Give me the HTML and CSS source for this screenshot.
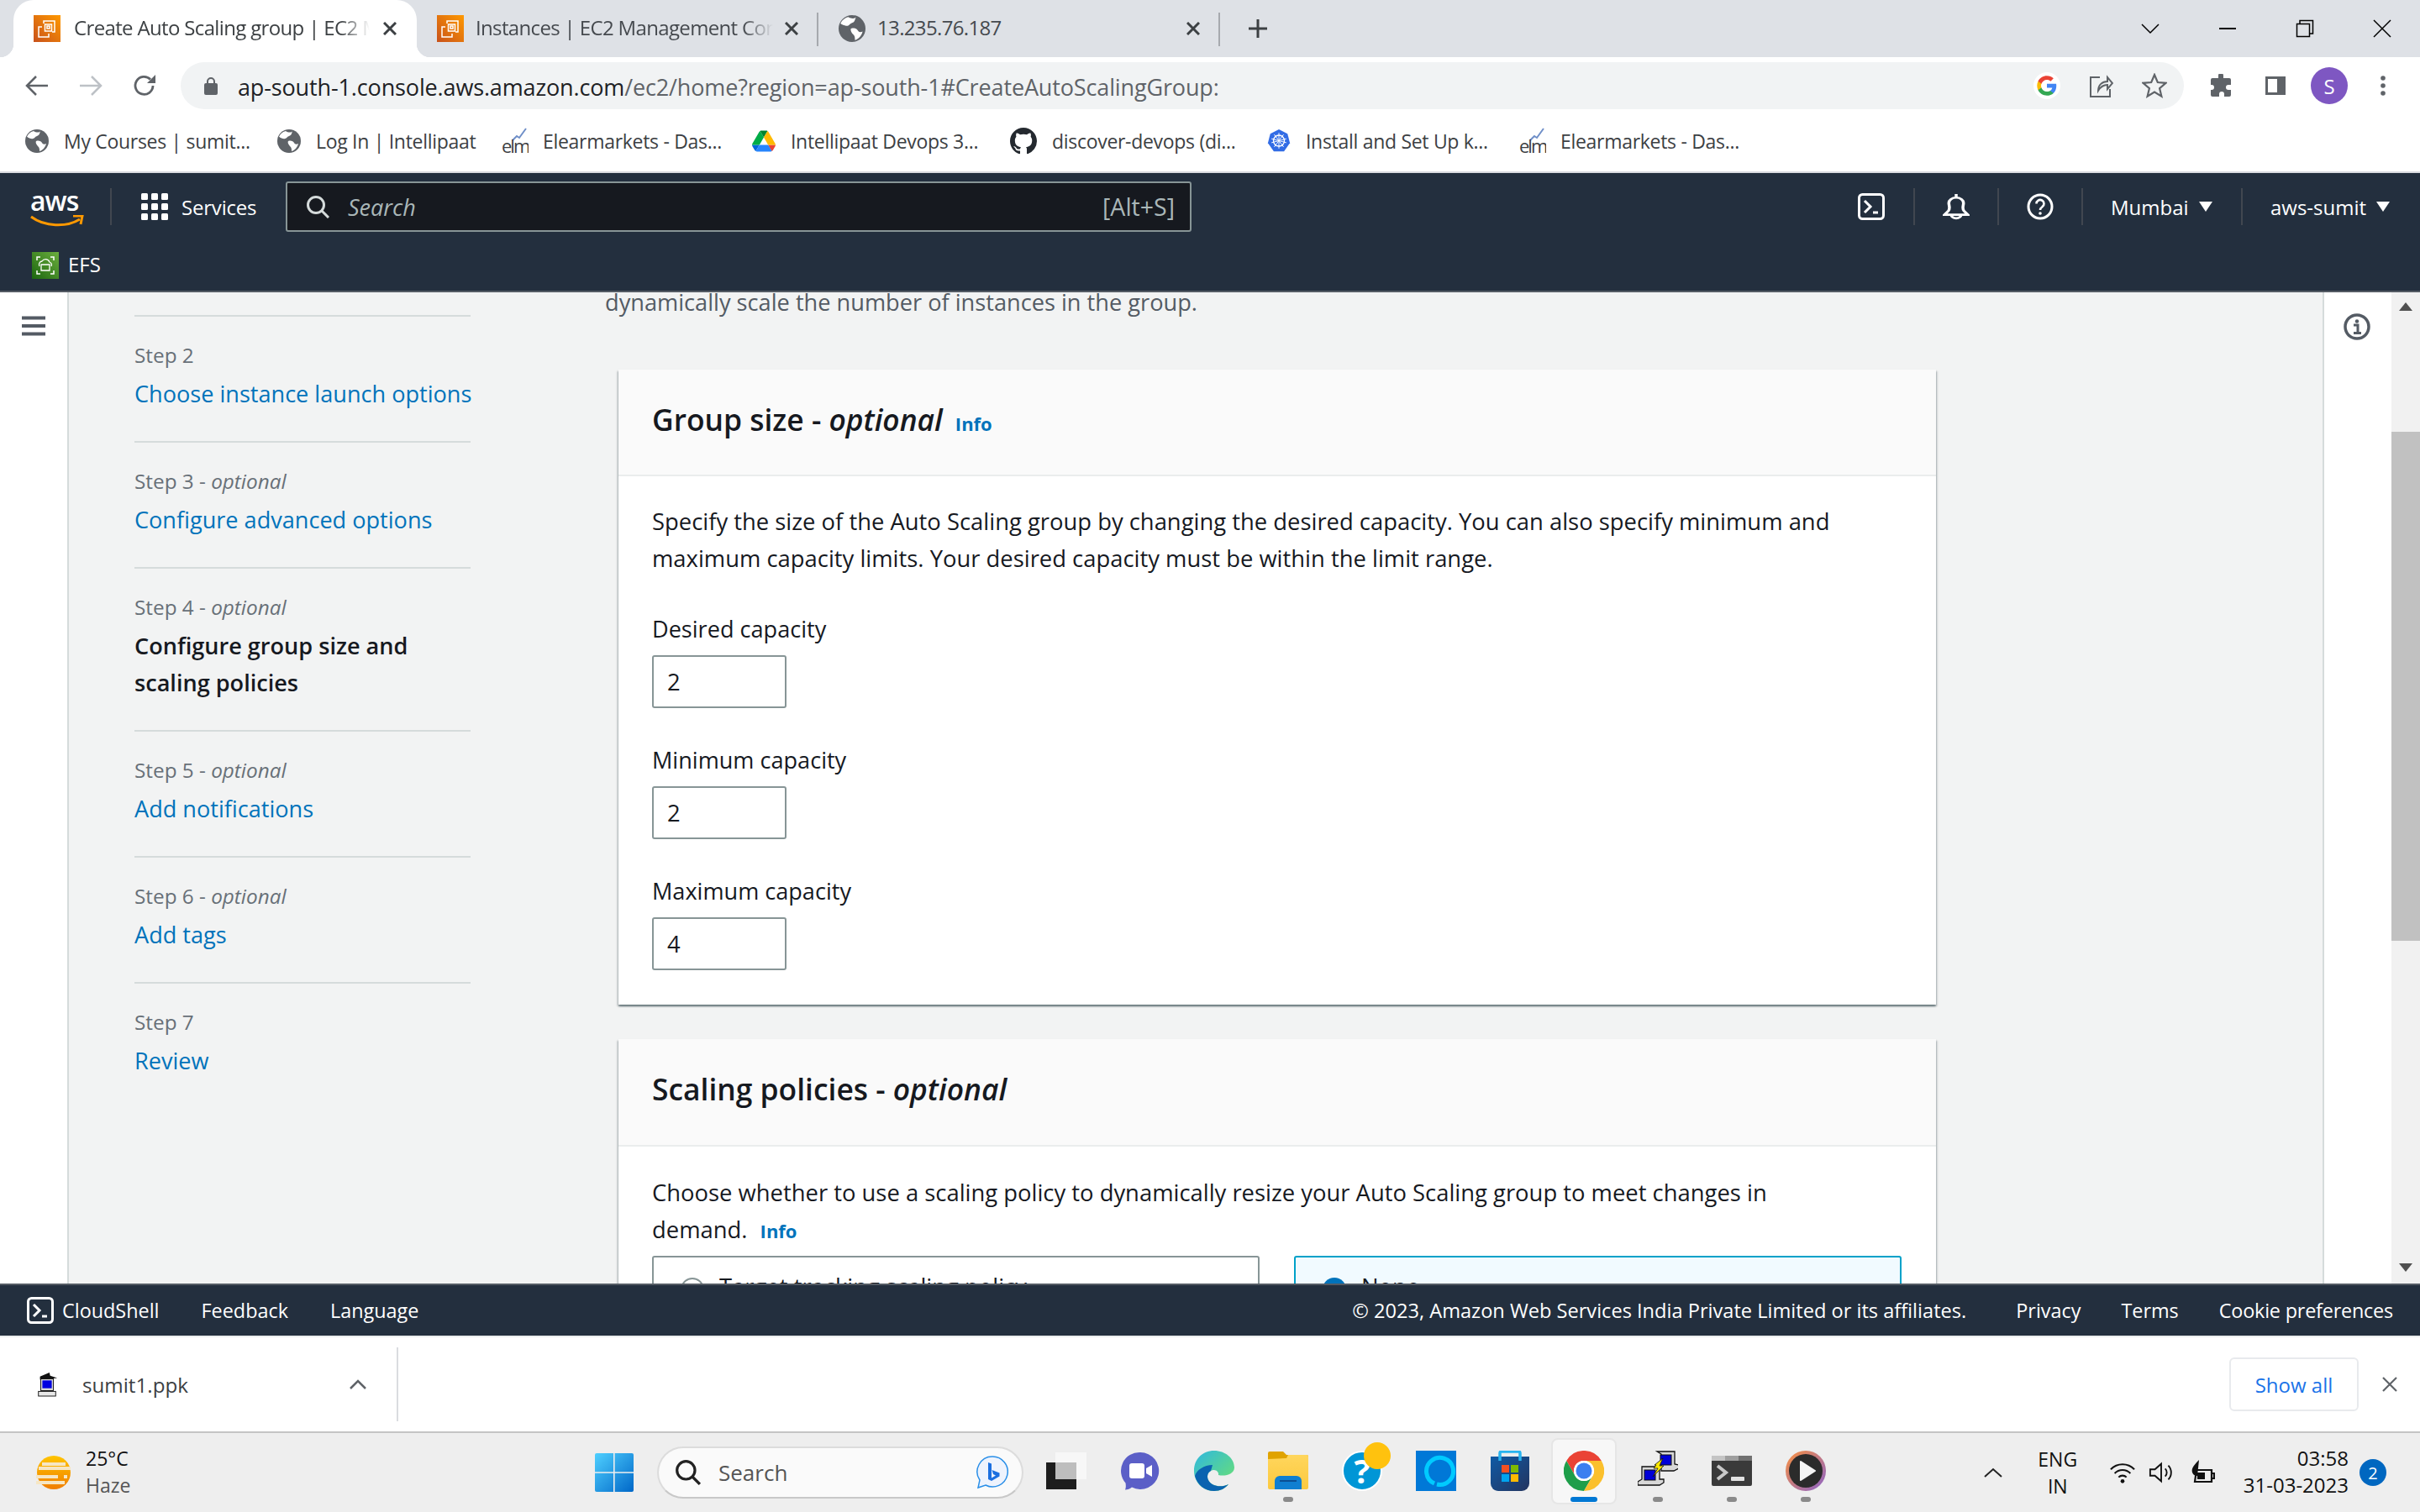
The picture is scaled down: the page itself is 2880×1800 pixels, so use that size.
FILE: index.html
```html
<!DOCTYPE html>
<html lang="en">
<head>
    <meta charset="UTF-8">
    <title>Create Auto Scaling group | EC2 Management Console</title>
    <link rel="stylesheet" href="styles.css">
</head>
<body>
    <svg class="sprite" xmlns="http://www.w3.org/2000/svg">
        <defs>
            <linearGradient id="ec2Grad" x1="0" y1="1" x2="1" y2="0"><stop offset="0" stop-color="#c8511b"/><stop offset="1" stop-color="#ff9900"/></linearGradient>
            <linearGradient id="efsGrad" x1="0" y1="1" x2="1" y2="0"><stop offset="0" stop-color="#1b660f"/><stop offset="1" stop-color="#6cae3e"/></linearGradient>
            <linearGradient id="winGrad" x1="0" y1="0" x2="1" y2="1"><stop offset="0" stop-color="#4fd0ff"/><stop offset="1" stop-color="#0067c8"/></linearGradient>
            <linearGradient id="edgeGrad" x1="0" y1="0" x2="1" y2="1"><stop offset="0" stop-color="#2fb8e0"/><stop offset="1" stop-color="#6fe36a"/></linearGradient>
            <linearGradient id="folderGrad" x1="0" y1="0" x2="0" y2="1"><stop offset="0" stop-color="#ffd65c"/><stop offset="1" stop-color="#fcc93f"/></linearGradient>
            <linearGradient id="playGrad" x1="0" y1="0" x2="1" y2="1"><stop offset="0" stop-color="#f9903e"/><stop offset="1" stop-color="#8b62c9"/></linearGradient>
            <linearGradient id="sunGrad" x1="0" y1="0" x2="0" y2="1"><stop offset="0" stop-color="#ffc400"/><stop offset="1" stop-color="#f07d00"/></linearGradient>
            <linearGradient id="storeGrad" x1="0" y1="0" x2="1" y2="1"><stop offset="0" stop-color="#0f5aa5"/><stop offset="1" stop-color="#23345f"/></linearGradient>
        </defs>
        <symbol id="ec2" viewBox="0 0 32 32">
            <rect width="32" height="32" fill="url(#ec2Grad)"/>
            <path d="M12 10V7h13v13h-3M16 13h3v3h-3zM13.500 11h8v8h-8zM10 14H6v12h12v-4" fill="none" stroke="#fff" stroke-width="1.500"/>
        </symbol>
        <symbol id="globe" viewBox="0 0 28 28">
            <circle cx="14" cy="14" r="14" fill="#5f6368"/>
            <path d="M10 2c3 2 7 2 8 0-1 3-1 5-4 6s-3 4-7 3-4-2-5-2c1-3 4-6 8-7zM13 14c3-1 6 0 7 2s3 2 5 1c-1 4-4 8-8 9 0-3 0-4-2-6s-3-5-2-6z" fill="#fff"/>
        </symbol>
        <symbol id="elm" viewBox="0 0 32 32">
            <path d="M13 15l5-5 3 2 8-11" fill="none" stroke="#6f8fc8" stroke-width="2"/>
            <text x="0" y="30" class="elm-text">elm</text>
        </symbol>
        <symbol id="drive" viewBox="0 0 87.300 78">
            <path d="m6.600 66.850 3.850 6.650c.8 1.400 1.950 2.500 3.300 3.300l13.750-23.800h-27.500c0 1.550.4 3.100 1.200 4.500z" fill="#0066da"/>
            <path d="m43.650 25-13.750-23.800c-1.350.8-2.500 1.900-3.300 3.300l-25.400 44a9.060 9.060 0 0 0 -1.200 4.500h27.500z" fill="#00ac47"/>
            <path d="m73.550 76.800c1.350-.8 2.500-1.900 3.300-3.300l1.600-2.750 7.650-13.250c.8-1.400 1.200-2.950 1.200-4.500h-27.502l5.852 11.500z" fill="#ea4335"/>
            <path d="m43.650 25 13.750-23.800c-1.350-.8-2.900-1.200-4.500-1.200h-18.500c-1.600 0-3.150.45-4.500 1.200z" fill="#00832d"/>
            <path d="m59.800 53h-32.300l-13.750 23.800c1.350.8 2.900 1.200 4.500 1.200h50.800c1.600 0 3.150-.45 4.500-1.200z" fill="#2684fc"/>
            <path d="m73.400 26.500-12.700-22c-.8-1.400-1.950-2.500-3.300-3.300l-13.750 23.800 16.150 28h27.450c0-1.550-.4-3.100-1.200-4.500z" fill="#ffba00"/>
        </symbol>
        <symbol id="github" viewBox="0 0 16 16">
            <path d="M8 0C3.580 0 0 3.580 0 8c0 3.540 2.290 6.530 5.470 7.590.4.07.55-.17.55-.38 0-.19-.01-.82-.01-1.490-2.010.37-2.530-.49-2.690-.94-.09-.23-.48-.94-.82-1.130-.28-.15-.68-.52-.01-.53.63-.01 1.080.58 1.230.82.72 1.210 1.870.87 2.330.66.07-.52.28-.87.51-1.070-1.780-.2-3.640-.89-3.640-3.950 0-.87.31-1.590.82-2.150-.08-.2-.36-1.020.08-2.120 0 0 .67-.21 2.200.82.64-.18 1.320-.27 2-.27.68 0 1.360.09 2 .27 1.530-1.040 2.200-.82 2.200-.82.44 1.100.16 1.920.08 2.120.51.56.82 1.270.82 2.150 0 3.070-1.870 3.750-3.650 3.950.29.25.54.73.54 1.480 0 1.070-.01 1.930-.01 2.200 0 .21.15.46.55.38A8.013 8.013 0 0016 8c0-4.420-3.580-8-8-8z" fill="#24292f"/>
        </symbol>
        <symbol id="k8s" viewBox="0 0 30 30">
            <path d="M15 0l11 5.500 3 12-7.500 10.500h-13L1 17.500l3-12z" fill="#326ce5"/>
            <circle cx="15" cy="14.500" r="7" fill="none" stroke="#fff" stroke-width="1.500"/>
            <path d="M15 4.500v20M5.500 12l19 5M24.500 12l-19 5M9 6.500l12 16M21 6.500l-12 16" stroke="#fff" stroke-width="1"/>
        </symbol>
        <symbol id="shell" viewBox="0 0 32 32">
            <rect x="1.500" y="1.500" width="29" height="29" rx="4" fill="none" stroke="#fff" stroke-width="3"/>
            <path d="M8 9l7 7-7 7" fill="none" stroke="#fff" stroke-width="3"/>
            <path d="M18 23h6" stroke="#fff" stroke-width="3"/>
        </symbol>
        <symbol id="caret" viewBox="0 0 16 12"><path d="M0 0h16L8 12z" fill="#fff"/></symbol>
    </svg>

    <div class="tabstrip">
        <div class="tab tab-active">
            <svg class="fav"><use href="#ec2"/></svg>
            <span class="tab-title">Create Auto Scaling group | EC2 M</span>
            <svg class="tab-close" viewBox="0 0 16 16"><path d="M1 1l14 14M15 1L1 15" stroke="#3c4043" stroke-width="3"/></svg>
        </div>
        <div class="tab tab-sep">
            <svg class="fav"><use href="#ec2"/></svg>
            <span class="tab-title">Instances | EC2 Management Con</span>
            <svg class="tab-close" viewBox="0 0 16 16"><path d="M1 1l14 14M15 1L1 15" stroke="#3c4043" stroke-width="3"/></svg>
        </div>
        <div class="tab tab-sep">
            <svg class="fav"><use href="#globe"/></svg>
            <span class="tab-title tab-title-full">13.235.76.187</span>
            <svg class="tab-close" viewBox="0 0 16 16"><path d="M1 1l14 14M15 1L1 15" stroke="#3c4043" stroke-width="3"/></svg>
        </div>
        <svg class="newtab" viewBox="0 0 24 24"><path d="M12 1v22M1 12h22" stroke="#3c4043" stroke-width="3"/></svg>
        <div class="winctl">
            <svg viewBox="0 0 22 12"><path d="M1 1l10 10L21 1" fill="none" stroke="#000" stroke-width="1.500"/></svg>
            <svg viewBox="0 0 22 12"><path d="M1 6h20" stroke="#000" stroke-width="2"/></svg>
            <svg viewBox="0 0 22 22"><path d="M1.500 5.500h15v15h-15zM5 5V1.500h15.500V17H17" fill="none" stroke="#000" stroke-width="1.500"/></svg>
            <svg viewBox="0 0 22 22"><path d="M1 1l20 20M21 1L1 21" stroke="#000" stroke-width="1.500"/></svg>
        </div>
    </div>

    <div class="toolbar">
        <svg class="tool" viewBox="0 0 28 26"><path d="M27 13H3M13 2L2 13l11 11" fill="none" stroke="#5f6368" stroke-width="2.500"/></svg>
        <svg class="tool tool-off" viewBox="0 0 28 26"><path d="M1 13h24M15 2l11 11-11 11" fill="none" stroke="#bdc1c6" stroke-width="2.500"/></svg>
        <svg class="tool" viewBox="0 0 28 28"><path d="M24 14a10.500 10.500 0 1 1-3-7.500" fill="none" stroke="#5f6368" stroke-width="2.800"/><path d="M27 1v10H17z" fill="#5f6368"/></svg>
        <div class="omnibox">
            <svg class="lock" viewBox="0 0 16 22"><path d="M4 9V6a4 4 0 0 1 8 0v3" fill="none" stroke="#5f6368" stroke-width="2"/><rect y="8" width="16" height="14" rx="2" fill="#5f6368"/></svg>
            <span class="url">ap-south-1.console.aws.amazon.com<span class="url-dim">/ec2/home?region=ap-south-1#CreateAutoScalingGroup:</span></span>
            <svg class="g-logo" viewBox="0 0 24 24">
                <circle cx="12" cy="12" r="12" fill="#fff"/>
                <g transform="translate(2.400 2.400) scale(.8)">
                    <path d="M22.560 12.250c0-.78-.07-1.530-.2-2.250H12v4.260h5.920c-.26 1.370-1.040 2.530-2.210 3.310v2.770h3.570c2.080-1.920 3.280-4.740 3.280-8.090z" fill="#4285F4"/>
                    <path d="M12 23c2.970 0 5.460-.98 7.280-2.660l-3.570-2.770c-.98.66-2.230 1.060-3.710 1.060-2.860 0-5.290-1.930-6.160-4.530H2.180v2.840C3.990 20.530 7.700 23 12 23z" fill="#34A853"/>
                    <path d="M5.840 14.090c-.22-.66-.35-1.360-.35-2.090s.13-1.430.35-2.090V7.070H2.180C1.430 8.550 1 10.220 1 12s.43 3.450 1.180 4.930l2.850-2.220.81-.62z" fill="#FBBC05"/>
                    <path d="M12 5.380c1.620 0 3.060.56 4.210 1.640l3.150-3.150C17.450 2.090 14.970 1 12 1 7.700 1 3.990 3.470 2.180 7.070l3.660 2.840c.87-2.600 3.300-4.530 6.160-4.530z" fill="#EA4335"/>
                </g>
            </svg>
            <svg class="omni-icon" viewBox="0 0 30 30"><path d="M14 5H3v23h23v-9M12 21c0-7 5-11 11-11V5l6 7-6 7v-5c-5 0-8 2-11 7z" fill="none" stroke="#5f6368" stroke-width="2"/></svg>
            <svg class="omni-icon" viewBox="0 0 30 30"><path d="M15 2l3.800 9 9.700.8-7.400 6.400 2.300 9.500-8.400-5.100-8.400 5.100 2.300-9.500-7.400-6.400 9.700-.8z" fill="none" stroke="#5f6368" stroke-width="2.200"/></svg>
        </div>
        <svg class="tool-r" viewBox="0 0 28 28"><path d="M11 2a3 3 0 0 1 6 0v3h7a2 2 0 0 1 2 2v6h-3a3 3 0 0 0 0 6h3v6a2 2 0 0 1-2 2h-6v-3a3 3 0 0 0-6 0v3H4a2 2 0 0 1-2-2v-6h1a3 3 0 0 0 0-6H2V7a2 2 0 0 1 2-2h7z" fill="#5f6368"/></svg>
        <svg class="tool-r" viewBox="0 0 28 28"><rect x="2" y="3" width="24" height="22" fill="#5f6368"/><rect x="5" y="6" width="11" height="16" fill="#fff"/></svg>
        <div class="avatar">S</div>
        <svg class="tool-r" viewBox="0 0 28 28"><circle cx="14" cy="5" r="2.800" fill="#5f6368"/><circle cx="14" cy="14" r="2.800" fill="#5f6368"/><circle cx="14" cy="23" r="2.800" fill="#5f6368"/></svg>
    </div>

    <div class="bookmarks">
        <div class="bm"><svg class="bm-icon"><use href="#globe"/></svg><span>My Courses | sumit...</span></div>
        <div class="bm"><svg class="bm-icon"><use href="#globe"/></svg><span>Log In | Intellipaat</span></div>
        <div class="bm"><svg class="bm-icon bm-elm"><use href="#elm"/></svg><span>Elearmarkets - Das...</span></div>
        <div class="bm"><svg class="bm-icon"><use href="#drive"/></svg><span>Intellipaat Devops 3...</span></div>
        <div class="bm"><svg class="bm-icon bm-gh"><use href="#github"/></svg><span>discover-devops (di...</span></div>
        <div class="bm"><svg class="bm-icon"><use href="#k8s"/></svg><span>Install and Set Up k...</span></div>
        <div class="bm"><svg class="bm-icon bm-elm"><use href="#elm"/></svg><span>Elearmarkets - Das...</span></div>
    </div>

    <header class="awsnav">
        <div class="navrow">
            <div class="logo">
                <span class="logo-text">aws</span>
                <svg class="logo-smile" viewBox="0 0 64 14"><path d="M1 2c16 12 42 13 58 3" fill="none" stroke="#ff9900" stroke-width="3"/><path d="M51 1l11 0-2 10" fill="none" stroke="#ff9900" stroke-width="3"/></svg>
            </div>
            <div class="services">
                <svg class="grid-icon" viewBox="0 0 32 32">
                    <rect width="8" height="8" rx="1.500"/><rect x="12" width="8" height="8" rx="1.500"/><rect x="24" width="8" height="8" rx="1.500"/>
                    <rect y="12" width="8" height="8" rx="1.500"/><rect x="12" y="12" width="8" height="8" rx="1.500"/><rect x="24" y="12" width="8" height="8" rx="1.500"/>
                    <rect y="24" width="8" height="8" rx="1.500"/><rect x="12" y="24" width="8" height="8" rx="1.500"/><rect x="24" y="24" width="8" height="8" rx="1.500"/>
                </svg>
                <span>Services</span>
            </div>
            <div class="navsearch">
                <svg class="navsearch-icon" viewBox="0 0 28 28"><circle cx="12" cy="12" r="9.500" fill="none" stroke="#d5dbdb" stroke-width="3"/><path d="M19 19l8 8" stroke="#d5dbdb" stroke-width="3"/></svg>
                <span class="navsearch-text">Search</span>
                <span class="navsearch-key">[Alt+S]</span>
            </div>
            <div class="navright">
                <div class="navicon"><svg class="navicon-svg"><use href="#shell"/></svg></div>
                <div class="navicon navsep">
                    <svg class="navicon-svg" viewBox="5 0 22 30" preserveAspectRatio="none"><path d="M16 1v3M9.500 20c2-3 .5-6 .5-9a6 6 0 0 1 12 0c0 3-1.500 6 .5 9l3 4H6.500zM12 24a4 4 0 0 0 8 0" fill="none" stroke="#fff" stroke-width="2.400"/></svg>
                </div>
                <div class="navicon navsep">
                    <svg class="navicon-svg" viewBox="0 0 32 32"><circle cx="16" cy="16" r="14" fill="none" stroke="#fff" stroke-width="3"/><path d="M11.500 12.500a4.500 4.500 0 1 1 7 3.700c-1.700 1.200-2.500 2-2.500 3.800" fill="none" stroke="#fff" stroke-width="2.600"/><circle cx="16" cy="24" r="1.800" fill="#fff"/></svg>
                </div>
                <div class="navmenu navsep navmenu-region"><span>Mumbai</span><svg class="caret"><use href="#caret"/></svg></div>
                <div class="navmenu navsep"><span>aws-sumit</span><svg class="caret"><use href="#caret"/></svg></div>
            </div>
        </div>
        <div class="navrow2">
            <svg class="efs-icon" viewBox="0 0 32 32">
                <rect width="32" height="32" fill="url(#efsGrad)"/>
                <path d="M6 10V6h4M22 6h4v4M26 22v4h-4M10 26H6v-4" fill="none" stroke="#fff" stroke-width="1.500"/>
                <path d="M9 17a4 4 0 0 1 3-6 5 5 0 0 1 9 1 3.500 3.500 0 0 1 2 5" fill="none" stroke="#fff" stroke-width="1.300"/>
                <path d="M11 15h10v7H11z" fill="none" stroke="#fff" stroke-width="1.300"/>
            </svg>
            <span>EFS</span>
        </div>
    </header>

    <div class="console">
        <div class="rail">
            <svg class="hamburger" viewBox="0 0 28 24"><path d="M0 2.500h28M0 12h28M0 21.500h28" stroke="#545b64" stroke-width="4"/></svg>
        </div>
        <div class="workspace">
            <nav class="steps">
                <div class="step">
                    <div class="step-label">Step 2</div>
                    <div class="step-link">Choose instance launch options</div>
                </div>
                <div class="step">
                    <div class="step-label">Step 3 - <i>optional</i></div>
                    <div class="step-link">Configure advanced options</div>
                </div>
                <div class="step">
                    <div class="step-label">Step 4 - <i>optional</i></div>
                    <div class="step-current">Configure group size and<br>scaling policies</div>
                </div>
                <div class="step">
                    <div class="step-label">Step 5 - <i>optional</i></div>
                    <div class="step-link">Add notifications</div>
                </div>
                <div class="step">
                    <div class="step-label">Step 6 - <i>optional</i></div>
                    <div class="step-link">Add tags</div>
                </div>
                <div class="step">
                    <div class="step-label">Step 7</div>
                    <div class="step-link">Review</div>
                </div>
            </nav>
            <main class="formcol">
                <p class="intro">dynamically scale the number of instances in the group.</p>

                <section class="card">
                    <div class="card-head">
                        <h2>Group size - <i>optional</i></h2>
                        <span class="info">Info</span>
                    </div>
                    <div class="card-body">
                        <p>Specify the size of the Auto Scaling group by changing the desired capacity. You can also specify minimum and<br>maximum capacity limits. Your desired capacity must be within the limit range.</p>
                        <div class="field">
                            <label>Desired capacity</label>
                            <div class="numinput">2</div>
                        </div>
                        <div class="field">
                            <label>Minimum capacity</label>
                            <div class="numinput">2</div>
                        </div>
                        <div class="field">
                            <label>Maximum capacity</label>
                            <div class="numinput">4</div>
                        </div>
                    </div>
                </section>

                <section class="card card-second">
                    <div class="card-head">
                        <h2>Scaling policies - <i>optional</i></h2>
                    </div>
                    <div class="card-body card-body-second">
                        <p>Choose whether to use a scaling policy to dynamically resize your Auto Scaling group to meet changes in<br>demand. <span class="info info-inline">Info</span></p>
                        <div class="tiles">
                            <div class="tile">
                                <span class="radio"></span>
                                <span class="tile-label">Target tracking scaling policy</span>
                            </div>
                            <div class="tile tile-on">
                                <span class="radio radio-on"></span>
                                <span class="tile-label">None</span>
                            </div>
                        </div>
                    </div>
                </section>
            </main>
        </div>
        <div class="rail-right">
            <svg class="info-icon" viewBox="0 0 32 32"><circle cx="16" cy="16" r="14" fill="none" stroke="#545b64" stroke-width="3.500"/><circle cx="16" cy="9.500" r="2.200" fill="#545b64"/><path d="M12 14h5v9M12 23.500h9" fill="none" stroke="#545b64" stroke-width="3"/></svg>
        </div>
        <div class="scrollbar">
            <svg class="sb-arrow" viewBox="0 0 16 10"><path d="M0 10L8 0l8 10z" fill="#505050"/></svg>
            <div class="sb-track"><div class="sb-thumb"></div></div>
            <svg class="sb-arrow" viewBox="0 0 16 10"><path d="M0 0l8 10 8-10z" fill="#505050"/></svg>
        </div>
    </div>

    <footer class="awsfoot">
        <svg class="foot-shell"><use href="#shell"/></svg>
        <span class="foot-shell-label">CloudShell</span>
        <span class="foot-item">Feedback</span>
        <span class="foot-item">Language</span>
        <span class="foot-copy">&copy; 2023, Amazon Web Services India Private Limited or its affiliates.</span>
        <span class="foot-item">Privacy</span>
        <span class="foot-item">Terms</span>
        <span class="foot-item foot-cookie">Cookie preferences</span>
    </footer>

    <div class="downloads">
        <div class="dl-item">
            <svg class="dl-icon" viewBox="0 0 30 32">
                <path d="M6 6l12-5 1 4 9 3-10 1-12 1z" fill="#111"/>
                <rect x="7" y="9" width="16" height="15" fill="#d8d8d8" stroke="#111"/>
                <rect x="9" y="11" width="12" height="10" fill="#0000e0"/>
                <rect x="4" y="25" width="22" height="6" fill="#e8e8e8" stroke="#111"/>
            </svg>
            <span class="dl-name">sumit1.ppk</span>
            <svg class="dl-chev" viewBox="0 0 20 12"><path d="M1 11l9-9 9 9" fill="none" stroke="#5f6368" stroke-width="2.500"/></svg>
        </div>
        <div class="dl-show">Show all</div>
        <svg class="dl-close" viewBox="0 0 18 18"><path d="M1 1l16 16M17 1L1 17" stroke="#5f6368" stroke-width="2.200"/></svg>
    </div>

    <div class="taskbar">
        <div class="weather">
            <svg class="weather-icon" viewBox="0 0 44 44">
                <circle cx="22" cy="22" r="20" fill="url(#sunGrad)"/>
                <path d="M8 12h28M4 17h38M1 27h26M34 27h4M1 34h34" stroke="#f6e6c4" stroke-width="4"/>
            </svg>
            <div class="weather-text">
                <div class="weather-temp">25°C</div>
                <div class="weather-cond">Haze</div>
            </div>
        </div>
        <svg class="winlogo" viewBox="0 0 46 46">
            <rect width="46" height="46" rx="2" fill="url(#winGrad)"/>
            <path d="M22.800 0v46M0 23h46" stroke="#eee" stroke-width="1.600"/>
        </svg>
        <div class="tb-search">
            <svg class="tb-search-icon" viewBox="0 0 30 30"><circle cx="12.500" cy="12.500" r="10" fill="none" stroke="#222" stroke-width="3"/><path d="M20 20l8 8" stroke="#222" stroke-width="3.200"/></svg>
            <span class="tb-search-text">Search</span>
            <svg class="bing" viewBox="0 0 40 40">
                <path d="M20 1a18 18 0 1 1-8 34l-9 3 2-9A18 18 0 0 1 20 1z" fill="#eef3fd" stroke="#2a8fe8" stroke-width="1.500"/>
                <path d="M15 8l4 1.500v17l5-3-3-1.500-1.500-5 9 3.500v4l-9.500 5.500L15 28z" fill="#1b6fe0"/>
            </svg>
        </div>
        <div class="tb-apps">
            <div class="tb-app">
                <svg class="tb-icon" viewBox="0 0 48 48">
                    <rect x="0" y="14" width="36" height="32" fill="#1d1d1d"/>
                    <rect x="11" y="2" width="37" height="32" fill="#f7f7f7"/>
                    <rect x="11" y="14" width="25" height="20" fill="#bdbdbd"/>
                </svg>
            </div>
            <div class="tb-app">
                <svg class="tb-icon" viewBox="0 0 48 48">
                    <path d="M24 2a22 22 0 1 1-10 41.500c-2 2-5 3-8 3 1-2 1-5 .5-8A22 22 0 0 1 24 2z" fill="#5b5fc7"/>
                    <rect x="11" y="15" width="18" height="18" rx="3" fill="#fff"/>
                    <path d="M31 21l7-4v14l-7-4z" fill="#fff"/>
                </svg>
            </div>
            <div class="tb-app">
                <svg class="tb-icon" viewBox="0 0 48 48">
                    <path d="M24 0C10 0 0 10 0 24c0 13 10 24 24 24 7 0 13-3 17-8-8 4-20 3-24-5-2-4-1-9 3-11 5-3 10 1 9 5 8 2 19-1 19-9C48 9 37 0 24 0z" fill="url(#edgeGrad)"/>
                    <path d="M22 17C12 17 3 23 1 30c3 11 12 18 23 18 7 0 13-3 17-8-8 4-20 3-24-5-2-4-1-9 3-11l2-7z" fill="#0a63b0"/>
                </svg>
            </div>
            <div class="tb-app">
                <svg class="tb-icon" viewBox="0 0 48 48">
                    <path d="M0 3a2 2 0 0 1 2-2h16l4 4h24a2 2 0 0 1 2 2v6H0z" fill="#e0a300"/>
                    <path d="M0 10l22-1 2-4h22a2 2 0 0 1 2 2v37a2 2 0 0 1-2 2H2a2 2 0 0 1-2-2z" fill="url(#folderGrad)"/>
                    <path d="M8 46V36a6 6 0 0 1 6-6h20a6 6 0 0 1 6 6v10z" fill="#0f7fd1"/>
                    <path d="M14 36h20" stroke="#0a4f93" stroke-width="2"/>
                </svg>
                <span class="tb-dot"></span>
            </div>
            <div class="tb-app">
                <svg class="tb-icon" viewBox="0 0 48 48">
                    <circle cx="24" cy="24" r="23" fill="#0096d6" stroke="#fff" stroke-width="2"/>
                    <text x="24" y="39" class="help-q">?</text>
                </svg>
                <span class="tb-badge"></span>
            </div>
            <div class="tb-app">
                <svg class="tb-icon" viewBox="0 0 48 48">
                    <rect width="48" height="48" fill="#0078d7"/>
                    <path d="M22 39a16 16 0 1 1 3 1" fill="none" stroke="#00caff" stroke-width="5"/>
                </svg>
            </div>
            <div class="tb-app">
                <svg class="tb-icon" viewBox="0 0 46 48">
                    <path d="M0 7h46v32a9 9 0 0 1-9 9H9a9 9 0 0 1-9-9z" fill="url(#storeGrad)"/>
                    <path d="M11 12V3a2 2 0 0 1 2-2h20a2 2 0 0 1 2 2v9" fill="none" stroke="#28b4f0" stroke-width="3.500"/>
                    <rect x="13" y="17" width="9" height="9" fill="#f25022"/>
                    <rect x="24" y="17" width="9" height="9" fill="#7fba00"/>
                    <rect x="13" y="28" width="9" height="9" fill="#00a4ef"/>
                    <rect x="24" y="28" width="9" height="9" fill="#ffb900"/>
                </svg>
            </div>
            <div class="tb-app tb-app-on">
                <svg class="tb-icon" viewBox="0 0 48 48">
                    <path d="M3.200 12A24 24 0 0 1 44.800 12H24A12 12 0 0 0 13.600 30z" fill="#ea4335"/>
                    <path d="M3.200 12L13.600 30A12 12 0 0 0 34.400 30L24 48A24 24 0 0 1 3.200 12z" fill="#1e9e4a"/>
                    <path d="M44.800 12A24 24 0 0 1 24 48L34.400 30A12 12 0 0 0 24 12z" fill="#fbc02d"/>
                    <circle cx="24" cy="24" r="12" fill="#fff"/>
                    <circle cx="24" cy="24" r="9.500" fill="#3b7ff0"/>
                </svg>
                <span class="tb-active"></span>
            </div>
            <div class="tb-app">
                <svg class="tb-icon" viewBox="0 0 48 48">
                    <path d="M23 1h21v15l5 1v4l-6 3H28V4z" fill="#d8d8d8" stroke="#111" stroke-width="1.300"/>
                    <rect x="27" y="5" width="13" height="12" fill="#0000d8" stroke="#111"/>
                    <path d="M5 19h21v15h5v4l-5 3H0v-4l5-3z" fill="#d8d8d8" stroke="#111" stroke-width="1.300"/>
                    <rect x="8" y="23" width="13" height="12" fill="#0000d8" stroke="#111"/>
                    <path d="M30 9l-4 9h5l-13 13 6-10h-5l3-4h-2z" fill="#ffe800" stroke="#111" stroke-width=".8"/>
                </svg>
                <span class="tb-dot"></span>
            </div>
            <div class="tb-app">
                <svg class="tb-icon" viewBox="0 0 48 48">
                    <rect y="6" width="48" height="36" rx="2" fill="#3a3a3a"/>
                    <rect y="6" width="16" height="6" fill="#c4c4c4"/><rect x="16" y="6" width="16" height="6" fill="#9e9e9e"/><rect x="32" y="6" width="16" height="6" fill="#707070"/>
                    <path d="M7 18l10 8-10 8" fill="none" stroke="#c8c8c8" stroke-width="4"/>
                    <rect x="23" y="31" width="16" height="5" rx="1" fill="#e2e2e2"/>
                </svg>
                <span class="tb-dot"></span>
            </div>
            <div class="tb-app">
                <svg class="tb-icon" viewBox="0 0 48 48">
                    <circle cx="24" cy="24" r="24" fill="url(#playGrad)"/>
                    <circle cx="24" cy="24" r="20" fill="#2b2b2b"/>
                    <path d="M18 13l17 11-17 11z" fill="#f4f4f4" stroke="#f4f4f4" stroke-width="2" stroke-linejoin="round"/>
                </svg>
                <span class="tb-dot"></span>
            </div>
        </div>
        <div class="tray">
            <svg class="tray-chev" viewBox="0 0 22 12"><path d="M1 11L11 2l10 9" fill="none" stroke="#222" stroke-width="2"/></svg>
            <div class="lang"><div>ENG</div><div>IN</div></div>
            <svg class="tray-icon tray-wifi" viewBox="0 0 32 32"><path d="M1 12a21 21 0 0 1 30 0M6 17a14 14 0 0 1 20 0M11 22a7 7 0 0 1 10 0" fill="none" stroke="#111" stroke-width="2.200"/><circle cx="16" cy="27" r="2.500" fill="#111"/></svg>
            <svg class="tray-icon tray-sound" viewBox="0 0 32 32"><path d="M2 12h6l8-7v22l-8-7H2z" fill="none" stroke="#111" stroke-width="2"/><path d="M21 11a7 7 0 0 1 0 10M25 7a13 13 0 0 1 0 18" fill="none" stroke="#111" stroke-width="2"/></svg>
            <svg class="tray-icon tray-batt" viewBox="0 0 32 32"><path d="M13 1c-8 8-9 11-8 15 1 3 4 4 6 4l2-19z" fill="#111"/><path d="M10 13h18v14H8zM28 17h3v6h-3" fill="none" stroke="#111" stroke-width="2.200"/><rect x="11" y="16" width="9" height="8" fill="#111"/></svg>
            <div class="clock"><div>03:58</div><div>31-03-2023</div></div>
            <div class="notif">2</div>
        </div>
    </div>
</body>
</html>
```

FILE: styles.css
```css
* {
    box-sizing: border-box;
}
html, body {
    margin: 0;
    padding: 0;
}
body {
    width: 2880px;
    height: 1800px;
    overflow: hidden;
    font-family: "Open Sans", "Noto Sans", sans-serif;
    background-color: #fff;
    color: #16191f;
}
.sprite {
    position: absolute;
    width: 0;
    height: 0;
}
.elm-text {
    font-family: "Open Sans", sans-serif;
    font-size: 22px;
    fill: #3c4043;
    letter-spacing: -2px;
}

/* browser chrome */
.tabstrip {
    height: 68px;
    background-color: #dee1e6;
    display: flex;
    align-items: center;
    padding-left: 16px;
    padding-right: 34px;
}
.tab {
    position: relative;
    width: 478px;
    height: 68px;
    display: flex;
    align-items: center;
    padding: 0 24px;
    gap: 14px;
    color: #45494e;
    font-size: 24px;
    letter-spacing: -0.65px;
}
.tab-active {
    width: 480px;
    gap: 16px;
    background-color: #fff;
    border-radius: 24px 24px 0 0;
    color: #3c4043;
}
.tab-active::before,
.tab-active::after {
    content: "";
    position: absolute;
    bottom: 0;
    width: 16px;
    height: 16px;
}
.tab-active::before {
    left: -16px;
    background: radial-gradient(circle at 0 0, transparent 16px, #fff 16.500px);
}
.tab-active::after {
    right: -16px;
    background: radial-gradient(circle at 100% 0, transparent 16px, #fff 16.500px);
}
.tab-sep::after {
    content: "";
    position: absolute;
    right: 0;
    top: 15px;
    height: 40px;
    width: 2px;
    background-color: #a6a9ae;
}
.fav {
    width: 32px;
    height: 32px;
    flex: none;
}
.tab-title {
    flex: 1;
    min-width: 0;
    padding-bottom: 3px;
    white-space: nowrap;
    -webkit-mask-image: linear-gradient(to right, #000 90%, transparent 100%);
    mask-image: linear-gradient(to right, #000 90%, transparent 100%);
}
.tab-title-full {
    -webkit-mask-image: none;
    mask-image: none;
}
.tab-close {
    flex: none;
    width: 16px;
    height: 16px;
}
.newtab {
    width: 24px;
    height: 24px;
    margin-left: 33px;
}
.winctl {
    margin-left: auto;
    display: flex;
    align-items: center;
    gap: 70px;
}
.winctl svg {
    width: 22px;
    height: 22px;
}
.toolbar {
    height: 68px;
    display: flex;
    align-items: center;
    padding-left: 30px;
    background-color: #fff;
}
.tool {
    width: 28px;
    height: 28px;
    margin-right: 36px;
    flex: none;
}
.omnibox {
    width: 2384px;
    height: 56px;
    flex: none;
    margin-left: -7px;
    margin-right: 30px;
    border-radius: 28px;
    background-color: #f1f3f4;
    display: flex;
    align-items: center;
    padding-left: 28px;
}
.lock {
    width: 16px;
    height: 22px;
    flex: none;
}
.url {
    margin-left: 24px;
    padding-top: 3px;
    font-size: 27px;
    letter-spacing: -0.14px;
    color: #202124;
    white-space: nowrap;
}
.url-dim {
    color: #5f6368;
}
.g-logo {
    width: 32px;
    height: 32px;
    margin-left: auto;
    margin-right: 33px;
}
.omni-icon {
    width: 30px;
    height: 30px;
    margin-right: 34px;
}
.omni-icon:last-child {
    margin-right: 20px;
}
.tool-r {
    width: 28px;
    height: 28px;
    flex: none;
    margin-right: 37px;
}
.tool-r:last-child {
    margin-right: 0;
}
.avatar {
    width: 44px;
    height: 44px;
    flex: none;
    margin-left: -9px;
    margin-right: 28px;
    border-radius: 50%;
    background-color: #7e57c2;
    color: #fff;
    font-size: 24px;
    display: flex;
    align-items: center;
    justify-content: center;
}
.bookmarks {
    height: 70px;
    padding-left: 30px;
    padding-bottom: 4px;
    border-bottom: 2px solid #dadce0;
    display: grid;
    grid-template-columns: 300px 267px 298px 307px 306px 300px auto;
    align-items: center;
    font-size: 23px;
    letter-spacing: -0.3px;
    color: #3c4043;
}
.bm {
    display: flex;
    align-items: center;
    gap: 18px;
    white-space: nowrap;
}
.bm-icon {
    width: 28px;
    height: 28px;
    flex: none;
}
.bm-elm {
    width: 32px;
    height: 32px;
}
.bm-elm + span {
    margin-left: -1px;
}
.bm-gh {
    width: 32px;
    height: 32px;
}

/* aws top nav */
.awsnav {
    height: 142px;
    background-color: #232f3e;
    border-bottom: 2px solid #545b64;
    color: #fff;
}
.navrow {
    height: 80px;
    display: flex;
    align-items: center;
    padding-left: 36px;
}
.logo {
    width: 97px;
    height: 44px;
    border-right: 2px solid #414750;
    position: relative;
    flex: none;
}
.logo-text {
    display: block;
    font-size: 32px;
    font-weight: 600;
    line-height: 30px;
    letter-spacing: -1px;
}
.logo-smile {
    display: block;
    width: 64px;
    height: 14px;
    margin-top: 2px;
}
.services {
    display: flex;
    align-items: center;
    margin-left: 35px;
    gap: 16px;
    font-size: 24px;
    letter-spacing: -0.2px;
    width: 172px;
    flex: none;
}
.grid-icon {
    width: 32px;
    height: 32px;
    fill: #fff;
}
.navsearch {
    width: 1078px;
    height: 60px;
    flex: none;
    border: 2px solid #879596;
    border-radius: 3px;
    background-color: #16191f;
    display: flex;
    align-items: center;
    padding: 0 18px 0 22px;
}
.navsearch-icon {
    width: 28px;
    height: 28px;
}
.navsearch-text {
    margin-left: 22px;
    font-size: 27px;
    font-style: italic;
    color: #aab7b8;
}
.navsearch-key {
    margin-left: auto;
    font-size: 28.500px;
    color: #aab7b8;
}
.navright {
    margin-left: auto;
    display: flex;
    align-items: center;
}
.navicon {
    width: 100px;
    height: 44px;
    display: flex;
    align-items: center;
    justify-content: center;
}
.navsep {
    border-left: 2px solid #414750;
}
.navicon-svg {
    width: 32px;
    height: 32px;
}
.navmenu {
    width: 213px;
    height: 44px;
    padding-left: 33px;
    display: flex;
    align-items: center;
    gap: 12px;
    font-size: 24px;
}
.navmenu-region {
    width: 190px;
}
.caret {
    width: 16px;
    height: 12px;
}
.navrow2 {
    display: flex;
    align-items: center;
    height: 60px;
    padding-left: 38px;
    padding-bottom: 3px;
    gap: 11px;
    font-size: 24px;
}
.efs-icon {
    width: 32px;
    height: 32px;
    margin-top: 3px;
}

/* console body */
.console {
    height: 1180px;
    display: flex;
    overflow: hidden;
}
.rail {
    width: 82px;
    flex: none;
    background-color: #fff;
    border-right: 2px solid #d5dbdb;
    padding: 28px 0 0 26px;
}
.hamburger {
    display: block;
    width: 28px;
    height: 24px;
}
.workspace {
    flex: 1;
    display: flex;
    background-color: #f2f3f3;
    padding-left: 78px;
    overflow: hidden;
}
.steps {
    width: 400px;
    flex: none;
    padding-top: 27px;
}
.step {
    border-top: 2px solid #d5dbdb;
    padding: 29px 0 34px;
}
.step-label {
    font-size: 24.300px;
    line-height: 34px;
    color: #687078;
    white-space: nowrap;
}
.step-link,
.step-current {
    margin-top: 7px;
    font-size: 27.100px;
    line-height: 44px;
    color: #0073bb;
    white-space: nowrap;
}
.step-current {
    font-weight: 600;
    color: #16191f;
}
.formcol {
    margin-left: 160px;
    width: 1584px;
    flex: none;
}
.intro {
    margin: -10px 0 58px;
    font-size: 27.200px;
    line-height: 44px;
    color: #545b64;
    white-space: nowrap;
}
.card {
    margin-left: 16px;
    width: 1568px;
    background-color: #fff;
    box-shadow: 0 2px 2px 0 rgba(0,28,36,0.5), 2px 2px 2px 0 rgba(0,28,36,0.1), -2px 2px 2px 0 rgba(0,28,36,0.1);
}
.card-second {
    margin-top: 41px;
}
.card-head {
    height: 127px;
    padding: 0 40px;
    background-color: #fafafa;
    border-bottom: 2px solid #eaeded;
    display: flex;
    align-items: baseline;
    padding-top: 37px;
    gap: 15px;
}
.card-second .card-head {
    height: 128px;
}
.card-head h2 {
    margin: 0;
    font-size: 35.400px;
    line-height: 44px;
    font-weight: 600;
    white-space: nowrap;
}
.info {
    font-size: 22px;
    font-weight: 700;
    color: #0073bb;
}
.info-inline {
    margin-left: 8px;
}
.card-body {
    padding: 32px 40px 41px;
    font-size: 27.400px;
}
.card-body p {
    margin: 0;
    line-height: 44px;
    white-space: nowrap;
}
.card-body-second {
    padding-top: 33px;
}
.field {
    margin-top: 44px;
}
.field label {
    display: block;
    height: 36px;
    line-height: 36px;
    margin-bottom: 13px;
    font-size: 27.100px;
}
.numinput {
    width: 160px;
    height: 63px;
    border: 2px solid #879596;
    border-radius: 3px;
    background-color: #fff;
    padding-left: 16px;
    line-height: 59px;
}
.tiles {
    display: flex;
    gap: 41px;
    margin-top: 8px;
}
.tile {
    width: 723px;
    height: 120px;
    border: 2px solid #879596;
    border-radius: 3px;
    padding: 24px 0 0 32px;
    display: flex;
    align-items: flex-start;
    gap: 18px;
    line-height: 36px;
}
.tile-on {
    border-color: #00a1c9;
    background-color: #f1faff;
}
.tile-label {
    margin-top: -7px;
}
.radio {
    width: 28px;
    height: 28px;
    flex: none;
    border: 2px solid #879596;
    border-radius: 50%;
    background-color: #fff;
}
.radio-on {
    border: none;
    background-color: #0073bb;
}
.rail-right {
    width: 82px;
    flex: none;
    background-color: #fff;
    border-left: 2px solid #d5dbdb;
    padding: 25px 0 0 23px;
}
.info-icon {
    display: block;
    width: 32px;
    height: 32px;
}
.scrollbar {
    width: 34px;
    flex: none;
    background-color: #f1f1f1;
    display: flex;
    flex-direction: column;
    align-items: center;
    padding: 12px 0 14px;
}
.sb-arrow {
    width: 16px;
    height: 10px;
    flex: none;
}
.sb-track {
    flex: 1;
    width: 100%;
    padding-top: 144px;
}
.sb-thumb {
    height: 606px;
    background-color: #c1c1c1;
}

/* aws footer */
.awsfoot {
    height: 64px;
    background-color: #232f3e;
    border-top: 2px solid #545b64;
    border-bottom: 2px solid #eaeded;
    color: #fff;
    display: flex;
    align-items: center;
    padding: 0 32px;
    font-size: 23.400px;
    white-space: nowrap;
}
.foot-shell {
    width: 32px;
    height: 32px;
    margin-right: 10px;
}
.foot-item {
    margin-left: 50px;
}
.foot-copy {
    margin-left: auto;
    margin-right: 11px;
    font-size: 23.600px;
}
.foot-copy ~ .foot-item {
    margin-left: 48px;
}
.foot-cookie {
    letter-spacing: -0.2px;
}

/* download shelf */
.downloads {
    height: 112px;
    background-color: #fff;
    display: flex;
    align-items: center;
    padding-right: 27px;
}
.dl-item {
    width: 474px;
    height: 88px;
    border-right: 2px solid #dadce0;
    display: flex;
    align-items: center;
    padding-left: 42px;
}
.dl-icon {
    width: 28px;
    height: 30px;
    flex: none;
}
.dl-name {
    margin-left: 28px;
    font-size: 24.200px;
    color: #3c4043;
}
.dl-chev {
    margin-left: auto;
    margin-right: 36px;
    width: 20px;
    height: 12px;
}
.dl-show {
    margin-left: auto;
    width: 154px;
    height: 64px;
    border: 2px solid #e8eaed;
    border-radius: 6px;
    color: #1a73e8;
    font-size: 24px;
    display: flex;
    align-items: center;
    justify-content: center;
}
.dl-close {
    margin-left: 28px;
    width: 18px;
    height: 18px;
}

/* windows taskbar */
.taskbar {
    height: 96px;
    background-color: #eeeeee;
    border-top: 2px solid #c4c4c4;
    display: flex;
    align-items: center;
    padding-left: 42px;
}
.weather {
    width: 666px;
    flex: none;
    display: flex;
    align-items: center;
    gap: 16px;
}
.weather-icon {
    width: 44px;
    height: 44px;
}
.weather-text {
    margin-top: -3px;
}
.weather-temp {
    font-size: 23px;
    line-height: 32px;
    color: #111;
}
.weather-cond {
    font-size: 23px;
    line-height: 32px;
    color: #555;
}
.winlogo {
    width: 46px;
    height: 46px;
    flex: none;
}
.tb-search {
    width: 436px;
    height: 62px;
    flex: none;
    margin-left: 28px;
    border: 2px solid #dcdcdc;
    border-bottom-color: #c8c8c8;
    border-radius: 31px;
    background-color: #fafafa;
    display: flex;
    align-items: center;
    padding-left: 19px;
}
.tb-search-icon {
    width: 32px;
    height: 32px;
}
.tb-search-text {
    margin-left: 20px;
    font-size: 26px;
    color: #555;
}
.bing {
    margin-left: auto;
    margin-right: 15px;
    width: 40px;
    height: 40px;
}
.tb-apps {
    display: flex;
    margin-left: 7px;
}
.tb-app {
    position: relative;
    width: 88px;
    height: 94px;
    display: flex;
    flex-direction: column;
    align-items: center;
    padding-top: 21px;
}
.tb-app-on::before {
    content: "";
    position: absolute;
    left: 5px;
    right: 5px;
    top: 6px;
    bottom: 9px;
    background-color: #f7f7f7;
    border: 2px solid #e6e6e6;
    border-radius: 8px;
}
.tb-icon {
    position: relative;
    width: 48px;
    height: 48px;
    flex: none;
}
.tb-dot {
    margin-top: 7px;
    width: 12px;
    height: 6px;
    border-radius: 3px;
    background-color: #8a8a8a;
}
.tb-active {
    position: relative;
    margin-top: 7px;
    width: 32px;
    height: 6px;
    border-radius: 3px;
    background-color: #0078d4;
}
.tb-badge {
    position: absolute;
    left: 46px;
    top: 11px;
    width: 32px;
    height: 32px;
    border-radius: 50%;
    background-color: #ffc20e;
}
.help-q {
    font-family: "Open Sans", sans-serif;
    font-size: 40px;
    font-weight: 700;
    fill: #fff;
    text-anchor: middle;
}
.tray {
    margin-left: auto;
    display: flex;
    align-items: center;
    padding-right: 40px;
}
.tray-chev {
    width: 22px;
    height: 12px;
}
.lang {
    margin-left: 28px;
    width: 76px;
    text-align: center;
    font-size: 23px;
    line-height: 32px;
    color: #111;
}
.tray-icon {
    width: 30px;
    height: 30px;
}
.tray-wifi {
    margin-left: 24px;
}
.tray-sound {
    margin-left: 16px;
}
.tray-batt {
    margin-left: 17px;
    width: 32px;
    height: 32px;
}
.clock {
    margin-left: 34px;
    margin-top: -3px;
    text-align: right;
    font-size: 24px;
    line-height: 32px;
    color: #111;
}
.notif {
    margin-left: 13px;
    width: 32px;
    height: 32px;
    border-radius: 50%;
    background-color: #0067c0;
    color: #fff;
    font-size: 20px;
    display: flex;
    align-items: center;
    justify-content: center;
}
```
